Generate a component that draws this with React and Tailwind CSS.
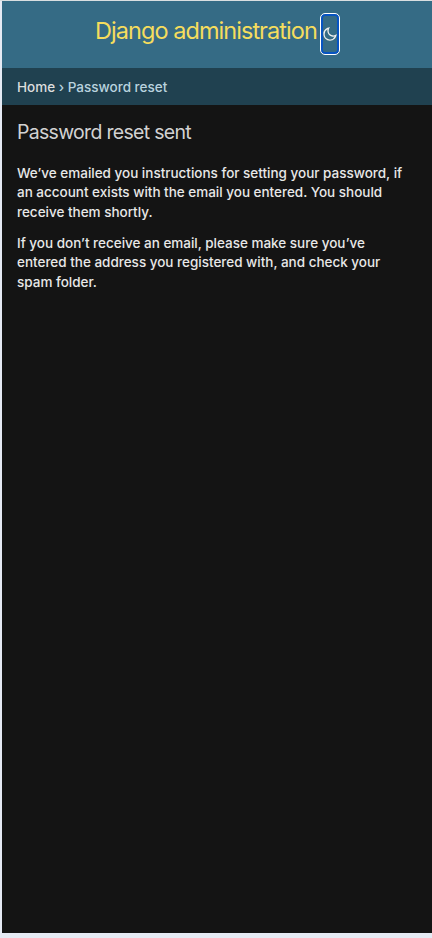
export default function App() {
  return (
    <div className="h-[938px] w-[432px] overflow-hidden bg-[#e5eaf4] font-['Inter','Liberation_Sans',sans-serif]">
      <div className="h-px bg-[#d9dee0]" />
      <div className="ml-[2px] flex h-[932px] w-[430px] flex-col bg-[#141414]">
        <header className="flex h-[67px] shrink-0 items-start bg-[#356b85] pt-3 pl-[93px]">
          <h1 className="mt-0.5 w-[222px] text-[23.5px] leading-8 font-normal tracking-[-0.95px] whitespace-nowrap text-[#f5dd5d]">Django administration</h1>
          <button aria-label="Toggle theme" className="ml-[3px] flex h-[42px] w-[20px] items-center justify-center rounded-[5px] border border-white bg-[#356b85] ring-2 ring-inset ring-[#0754c2]">
            <svg className="h-4 w-4 shrink-0" viewBox="0 0 24 24" fill="#eee"><path d="M10 7a7 7 0 0 0 12 4.900v.1c0 5.523-4.477 10-10 10S2 17.523 2 12 6.477 2 12 2h.1A6.979 6.979 0 0 0 10 7zm-6 5a8 8 0 0 0 15.062 3.762A9 9 0 0 1 8.238 4.938 7.999 7.999 0 0 0 4 12z" /></svg>
          </button>
        </header>
        <nav className="flex h-[37px] shrink-0 items-center bg-[#204150] px-[15px] pt-[2px] text-[13.5px] font-medium whitespace-pre text-[#b9d3df]"><span className="text-[#ddd]">Home</span> › Password reset</nav>
        <main className="px-[15px] pt-[14px] text-[13.5px] text-[#e8e8e8]">
          <h2 className="text-[19.5px] leading-[26px] font-normal tracking-[-0.7px] text-[#d2d2d2]">Password reset sent</h2>
          <p className="mt-[18.7px] leading-[19.5px] font-medium tracking-[-0.01px] whitespace-nowrap">We’ve emailed you instructions for setting your password, if<br />an account exists with the email you entered. You should<br />receive them shortly.</p>
          <p className="mt-[11.5px] leading-[19.5px] font-medium tracking-[-0.01px] whitespace-nowrap">If you don’t receive an email, please make sure you’ve<br />entered the address you registered with, and check your<br />spam folder.</p>
        </main>
      </div>
    </div>
  );
}
